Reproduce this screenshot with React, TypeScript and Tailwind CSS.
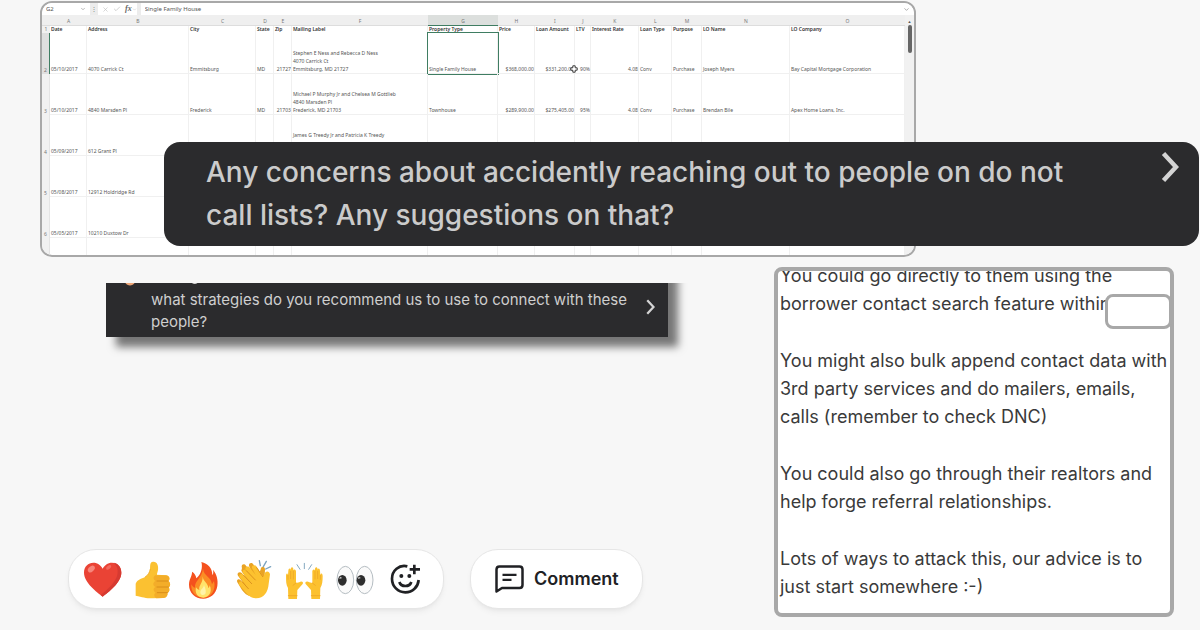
import { ReactNode } from 'react';
import { ChevronDown, Check, X } from 'lucide-react';

type Column = { letter: string; title: string; width: number; right?: boolean };

const ROW_HEADER = 8;
const COLUMNS: Column[] = [
  { letter: 'A', title: 'Date', width: 37 },
  { letter: 'B', title: 'Address', width: 102 },
  { letter: 'C', title: 'City', width: 67 },
  { letter: 'D', title: 'State', width: 18 },
  { letter: 'E', title: 'Zip', width: 18, right: true },
  { letter: 'F', title: 'Mailing Label', width: 136 },
  { letter: 'G', title: 'Property Type', width: 70 },
  { letter: 'H', title: 'Price', width: 37, right: true },
  { letter: 'I', title: 'Loan Amount', width: 40, right: true },
  { letter: 'J', title: 'LTV', width: 16, right: true },
  { letter: 'K', title: 'Interest Rate', width: 48, right: true },
  { letter: 'L', title: 'Loan Type', width: 33 },
  { letter: 'M', title: 'Purpose', width: 30 },
  { letter: 'N', title: 'LO Name', width: 88 },
  { letter: 'O', title: 'LO Company', width: 115 },
];
const TOTAL = COLUMNS.reduce((sum, c) => sum + c.width, ROW_HEADER);

const ROWS: string[][] = [
  ['05/10/2017', '4070 Carrick Ct', 'Emmitsburg', 'MD', '21727', 'Stephen E Ness and Rebecca D Ness\n4070 Carrick Ct\nEmmitsburg, MD 21727', 'Single Family House', '$368,000.00', '$331,200.00', '90%', '4.08', 'Conv', 'Purchase', 'Joseph Myers', 'Bay Capital Mortgage Corporation'],
  ['05/10/2017', '4840 Marsden Pl', 'Frederick', 'MD', '21703', 'Michael P Murphy Jr and Chelsea M Gottlieb\n4840 Marsden Pl\nFrederick, MD 21703', 'Townhouse', '$289,900.00', '$275,405.00', '95%', '4.08', 'Conv', 'Purchase', 'Brendan Bile', 'Apex Home Loans, Inc.'],
  ['05/09/2017', '612 Grant Pl', '', '', '', 'James G Treedy Jr and Patricia K Treedy\n\n ', '', '', '', '', '', '', '', '', ''],
  ['05/08/2017', '12912 Holdridge Rd', '', '', '', '', '', '', '', '', '', '', '', '', ''],
  ['05/05/2017', '10210 Duxtow Dr', '', '', '', '', '', '', '', '', '', '', '', '', ''],
  ['', '', '', '', '', '', '', '', '', '', '', '', '', '', ''],
];

function FormulaBar() {
  return (
    <div className="flex items-center h-3 bg-white text-[6px] leading-none text-[#666]">
      <input aria-label="Name box" defaultValue="G2" className="w-9 pl-1 text-[#555]" />
      <ChevronDown size={6} className="ml-0.5 text-[#777]" />
      <span className="ml-1 w-2 h-full bg-[#ececec] flex items-center justify-center text-[#777]">⋮</span>
      <X size={7} className="ml-1 text-[#bbb]" />
      <Check size={8} className="ml-1 text-[#bbb]" />
      <span className="ml-1 font-['Liberation_Serif',serif] italic font-bold text-[8px]">fx</span>
      <ChevronDown size={5} className="text-[#bbb]" />
      <span className="w-1 h-full bg-[#ececec]" />
      <input aria-label="Formula" defaultValue="Single Family House" className="flex-1 pl-1 text-[#555]" />
      <ChevronDown size={7} className="mr-1 text-[#777]" />
    </div>
  );
}

function CellCursor() {
  return (
    <svg viewBox="0 0 10 10" className="absolute -right-1 bottom-0 w-2 h-2 z-10" aria-hidden="true">
      <path d="M3.5 1h3v2.500h2.500v3h-2.500v2.500h-3v-2.500h-2.500v-3h2.500z" fill="#fff" stroke="#333" strokeWidth="1.200" />
    </svg>
  );
}

function Sheet() {
  return (
    <div className="w-[73%] h-64 ml-10 mt-px border-2 border-[#a8a8a8] rounded-xl overflow-hidden bg-white font-['Noto_Sans',sans-serif]">
      <FormulaBar />
      <div className="flex">
        <table className="flex-1 table-fixed border-separate border-spacing-0 text-[5px] leading-[8px] text-[#555]">
          <colgroup>
            <col style={{ width: `${(ROW_HEADER / TOTAL) * 100}%` }} />
            {COLUMNS.map((c) => (
              <col key={c.letter} style={{ width: `${(c.width / TOTAL) * 100}%` }} />
            ))}
          </colgroup>
          <thead>
            <tr className="h-[11px] bg-[#efefef]">
              <th className="p-0 border-b border-[#ddd]" />
              {COLUMNS.map((c) => (
                <th
                  key={c.letter}
                  scope="col"
                  className={`p-0 font-normal align-bottom leading-[7px] border-b text-[#777] ${
                    c.letter === 'G' ? 'bg-[#dcdfdd] border-[#3f7d62]' : 'border-[#ddd]'
                  }`}
                >
                  {c.letter}
                </th>
              ))}
            </tr>
          </thead>
          <tbody>
            <tr className="h-[7px] font-semibold text-[#333]">
              <th scope="row" className="p-0 font-normal leading-[7px] text-[#777] bg-[#f1f1f1]">1</th>
              {COLUMNS.map((c) => (
                <td key={c.letter} className="p-0 pl-px border-r border-[#f1f1f1] leading-[7px] whitespace-nowrap">
                  {c.title}
                </td>
              ))}
            </tr>
            {ROWS.map((row, r) => (
              <tr key={r} className="h-[41px]">
                <th
                  scope="row"
                  className={`p-0 font-normal align-bottom text-[#777] ${
                    r === 0 ? 'bg-[#dfdfdf] border-r border-[#3f7d62]' : 'bg-[#f1f1f1] border-r border-[#e4e4e4]'
                  }`}
                >
                  {row[0] && r + 2}
                </th>
                {row.map((text, i) => {
                  const col = COLUMNS[i];
                  const selected = r === 0 && col.letter === 'G';
                  return (
                    <td
                      key={col.letter}
                      className={`relative p-0 pl-px align-bottom whitespace-pre border-r border-b border-[#f0f0f0] ${
                        col.right ? 'text-right' : 'text-left'
                      } ${selected ? 'outline outline-[#3f7d62]' : ''}`}
                    >
                      {text}
                      {r === 0 && col.letter === 'I' && <CellCursor />}
                    </td>
                  );
                })}
              </tr>
            ))}
          </tbody>
        </table>
        <div className="w-[9px] bg-[#f1f1f1] flex flex-col items-center pt-1">
          <span className="text-[4px] leading-[6px] text-[#555]">▲</span>
          <span className="w-1 h-7 rounded-full bg-[#666]" />
        </div>
      </div>
    </div>
  );
}

function Chevron({ className }: { className: string }) {
  return (
    <svg viewBox="0 0 18 32" className={className} fill="none" stroke="#d4d4d4" strokeWidth="4.500" aria-hidden="true">
      <path d="M2.500 2.500 L15 16 L2.500 29.500" />
    </svg>
  );
}

function Emoji({ label, children }: { label: string; children: ReactNode }) {
  return (
    <button type="button" aria-label={label} className="w-10 h-10">
      <svg viewBox="0 0 120 120" className="w-full h-full" aria-hidden="true">
        {children}
      </svg>
    </button>
  );
}

function Reactions() {
  return (
    <div className="w-[376px] flex items-center justify-between pl-[13px] pr-[18px] pt-px bg-white border border-[#e6e6e6] rounded-[28px] shadow-md shadow-black/5">
      <Emoji label="Love">
        <path d="M62 110C45 96 6 68 6 38C6 19 19 8 34 8C47 8 57 16 62 26C67 16 77 8 90 8C105 8 118 19 118 38C118 68 79 96 62 110Z" fill="#ea4335" />
        <path d="M62 110C79 96 118 68 118 38C118 19 105 8 95 8C109 20 112 42 98 62C88 78 72 92 56 105Z" fill="#d63a31" />
        <ellipse cx="28" cy="27" rx="12" ry="8" fill="#f7867b" transform="rotate(-42 28 27)" />
        <ellipse cx="80" cy="22" rx="9" ry="5" fill="#f2685e" transform="rotate(-38 80 22)" />
      </Emoji>
      <Emoji label="Like">
        <path d="M8 71C13 58 25 57 36 51C45 46 50 36 51 27C52 16 50 6 60 5C73 4 77 18 75 30C74 37 71 42 72 44L98 46C110 46 112 59 106 63C113 68 113 78 107 82C111 88 110 96 103 99C105 106 100 113 91 114L58 115C38 115 28 111 8 107Z" fill="#fbc131" />
        <path d="M67 46L98 46C110 46 112 59 106 63C113 68 113 78 107 82C111 88 110 96 103 99C105 106 100 113 91 114L70 115C61 108 63 101 68 98C59 92 61 84 67 81C58 75 60 67 67 63C60 58 60 50 67 46Z" fill="#f3ad29" />
        <path d="M72 63H105M72 81H106M73 98H103" stroke="#d98e1a" strokeWidth="3" strokeLinecap="round" />
        <path d="M36 51C46 45 50 36 52 27" stroke="#e9a324" strokeWidth="2" fill="none" />
      </Emoji>
      <Emoji label="Fire">
        <path d="M55 6C75 10 88 25 88 45C92 41 91 34 90 29C101 42 106 60 103 78C99 103 81 116 61 116C36 116 18 98 18 74C18 56 28 48 27 35C35 40 39 47 40 55C54 44 60 22 55 6Z" fill="#f4511e" />
        <path d="M60 26C63 50 84 48 87 73L93 63C100 91 84 113 61 113C37 113 23 95 25 73C28 79 31 82 36 83C34 61 56 57 60 26Z" fill="#fb8c24" />
        <path d="M59 49C60 65 76 70 76 84C79 82 80 78 80 75C89 96 78 112 61 113C43 113 35 99 39 82C42 87 45 89 49 90C46 76 60 70 59 49Z" fill="#ffe36a" />
        <path d="M63 73C64 83 70 86 68 99C66 107 53 107 52 98C51 88 63 86 63 73Z" fill="#fff4a8" />
      </Emoji>
      <Emoji label="Applause">
        <path d="M24 24C20 14 30 9 36 17L54 39L45 17C44 8 55 6 59 15L75 43L80 28C82 17 93 19 93 29L91 62C91 91 75 109 55 109C40 109 30 99 22 87L10 67C6 59 15 55 20 61L27 68L12 47C7 38 18 33 24 40L38 56L22 32Z" fill="#e9a324" />
        <path d="M35 31C31 20 42 16 48 24L65 45L54 25C51 15 63 12 68 20L88 50L92 42C94 30 107 33 108 43L104 72C102 97 89 115 67 115C48 115 38 101 29 90L16 75C10 67 20 60 26 67L37 77L17 52C12 43 23 38 29 46L45 63L27 40C22 31 31 25 37 34L56 55Z" fill="#fcc12f" />
        <path d="M37 32L64 60M29 46L53 71M26 67L43 86M68 23L86 50" stroke="#db921f" strokeWidth="3" strokeLinecap="round" />
        <path d="M79 17L76 2M88 20L97 4M95 27L110 20" stroke="#7ca4bf" strokeWidth="4" strokeLinecap="round" />
      </Emoji>
      <Emoji label="Celebrate">
        <path d="M13 117L12 84C6 75 6 63 6 48C6 38 11 38 12 46L13 32C14 23 21 24 20 34V27C22 19 29 21 28 30V32C30 25 37 28 36 37V69L46 67C52 61 60 66 56 72L40 90L39 117Z" fill="#fcc12f" />
        <path d="M108 117L109 84C115 75 116 63 116 48C116 38 110 38 109 46L108 32C107 23 100 24 101 34V27C99 19 92 21 93 30V32C91 25 84 28 85 37V69L76 67C69 61 61 66 65 72L81 90L82 117Z" fill="#fcc12f" />
        <path d="M12 46V58M20 34V56M28 33V57M109 46V58M101 34V56M93 33V57M36 69L27 76M85 69L94 76M13 107H39M82 107H108" stroke="#f0ab29" strokeWidth="3" strokeLinecap="round" />
        <path d="M61 26V10M48 28L39 14M74 28L83 14" stroke="#85a9c1" strokeWidth="3" strokeLinecap="round" />
      </Emoji>
      <Emoji label="Watching">
        <ellipse cx="31" cy="60" rx="25" ry="41" fill="#fafafa" stroke="#b5bdc2" strokeWidth="3" />
        <ellipse cx="89" cy="60" rx="25" ry="41" fill="#fafafa" stroke="#b5bdc2" strokeWidth="3" />
        <ellipse cx="22" cy="61" rx="13" ry="16" fill="#2d2d2d" />
        <ellipse cx="78" cy="61" rx="13" ry="16" fill="#2d2d2d" />
        <path d="M15 50L22 54L13 57ZM71 50L78 54L69 57Z" fill="#c9c9c9" />
      </Emoji>
      <button type="button" aria-label="Add reaction" className="w-10 h-10">
        <svg viewBox="0 0 120 120" className="w-full h-full" fill="none" stroke="#202124" strokeWidth="8" aria-hidden="true">
          <path d="M67 19C42 13 21 32 21 56C21 79 39 97 61 97C83 97 99 81 101 60" />
          <path d="M88 14V43M74 28H105" />
          <path d="M43 66C48 82 74 82 79 66" />
          <circle cx="49" cy="48" r="6" fill="#202124" stroke="none" />
          <circle cx="73" cy="48" r="6" fill="#202124" stroke="none" />
        </svg>
      </button>
    </div>
  );
}

function CommentButton() {
  return (
    <button
      type="button"
      className="flex items-center gap-2.5 px-[23px] bg-white border border-[#e6e6e6] rounded-[28px] shadow-md shadow-black/5 text-lg font-semibold text-[#202124]"
    >
      <svg viewBox="0 0 30 30" className="w-[30px] h-[30px]" fill="none" stroke="#202124" strokeWidth="2.500" aria-hidden="true">
        <path d="M2.500 27.500V5.500C2.500 3.500 4 2.500 5.500 2.500H25.500C27.500 2.500 28.500 4 28.500 5.500V21C28.500 23 27 24 25.500 24H8Z" strokeLinejoin="round" />
        <path d="M8.500 10.800H22.500M8.500 15.800H17.500" strokeWidth="2.200" />
      </svg>
      Comment
    </button>
  );
}

const ADVICE = [
  ['You could go directly to them using the', 'borrower contact search feature within'],
  ['You might also bulk append contact data with', '3rd party services and do mailers, emails,', 'calls (remember to check DNC)'],
  ['You could also go through their realtors and', 'help forge referral relationships.'],
  ['Lots of ways to attack this, our advice is to', 'just start somewhere :-)'],
];

function AdviceCard() {
  return (
    <article className="relative w-1/3 h-[350px] shrink-0 mr-[26px]">
      {/* anchored to the bottom, so the first line runs under the top edge */}
      <div className="h-full flex flex-col justify-end gap-[29px] pl-0.5 pb-3 overflow-hidden bg-white border-4 border-[#a8a8a8] rounded-lg text-[18px] leading-7 text-[#3a3a3a] whitespace-nowrap">
        {ADVICE.map((lines) => (
          <p key={lines[0]}>
            {lines.map((line) => (
              <span key={line} className="block">{line}</span>
            ))}
          </p>
        ))}
      </div>
      <div className="absolute right-0.5 top-[27px] w-[67px] h-[35px] bg-white border-3 border-[#a8a8a8] rounded-lg" />
    </article>
  );
}

export default function App() {
  return (
    <main className="min-h-screen overflow-hidden bg-[#f7f7f7] font-['Inter',sans-serif]">
      <section className="relative">
        <Sheet />
        <a
          href="#do-not-call"
          className="absolute left-[164px] right-px top-[141px] flex items-start justify-between pl-[42px] pr-5 py-[9px] rounded-2xl bg-[#2b2b2d] text-[28px] leading-[43px] font-medium text-[#cbcbcb]"
        >
          <span>
            Any concerns about accidently reaching out to people on do not
            <br />
            call lists? Any suggestions on that?
          </span>
          <Chevron className="w-[18px] h-8" />
        </a>
      </section>

      <section className="flex justify-between pt-2.5">
        <div className="flex-1 flex flex-col justify-between ml-[68px] pt-4 pb-2">
          <div className="h-[74px] w-[582px] max-w-full ml-[38px] pr-5 pb-5 flex flex-col justify-end overflow-hidden">
            <a
              href="#strategies"
              className="flex flex-col shrink-0 pl-[45px] pr-3 pb-1 bg-[#2b2b2d] shadow-[10px_10px_8px_rgba(0,0,0,0.52)] text-[15px] leading-[22px] text-[#cfcfcf]"
            >
              <svg viewBox="0 0 80 30" className="w-20 h-[30px] -ml-7 shrink-0" aria-hidden="true">
                <path d="M2 22H12C12 28 2 28 2 22Z" fill="#eda476" />
                <path d="M68 22Q72 26 75 22" stroke="#d6d6d6" strokeWidth="2" fill="none" />
              </svg>
              <span className="flex items-start justify-between">
                <span>
                  what strategies do you recommend us to use to connect with these
                  <br />
                  people?
                </span>
                <Chevron className="w-[9px] h-4 mt-2.5 mr-px" />
              </span>
            </a>
          </div>
          <div className="flex gap-[26px] h-[60px]">
            <Reactions />
            <CommentButton />
          </div>
        </div>
        <AdviceCard />
      </section>
    </main>
  );
}
